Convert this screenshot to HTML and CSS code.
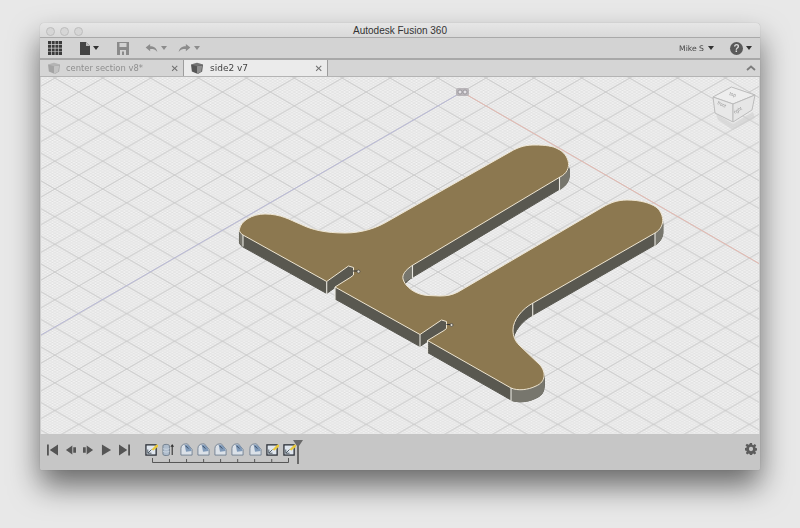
FILE: index.html
```html
<!DOCTYPE html>
<html lang="en">
<head>
<meta charset="utf-8">
<title>Autodesk Fusion 360</title>
<link rel="stylesheet" href="styles.css">
</head>
<body>
<svg class="defs" width="0" height="0" aria-hidden="true">
  <defs>
    <symbol id="cube" viewBox="0 0 16 14">
      <path d="M1 3 8 1l7 2-1 8-5 3-7-3z" fill="currentColor"/>
      <path d="M8 5v9l5-3 1-7z" fill="#fff" opacity=".35"/>
      <path d="M1 3l7 2 7-2-7-2z" fill="#fff" opacity=".18"/>
    </symbol>
    <symbol id="sketch" viewBox="0 0 14 14">
      <rect x="1" y="2" width="11" height="11" fill="#dfe6ee" stroke="#2c3038" stroke-width="1.4"/>
      <path d="M3 11V7M3 11h4M3 11l4-4" fill="none" stroke="#4a5560" stroke-width="1"/>
      <path d="M7 7l5-5 2 0v2l-5 4z" fill="#e8c83c"/>
    </symbol>
    <symbol id="extrude" viewBox="0 0 14 14">
      <path d="M1 3c0-2 7-2 7 0v9c0 2-7 2-7 0z" fill="#aebccc" stroke="#5d6c7c" stroke-width=".8"/>
      <path d="M1 6c2 1 5 1 7 0M1 9c2 1 5 1 7 0" fill="none" stroke="#dde4ec" stroke-width=".7"/>
      <path d="M11 13V3" stroke="#333" stroke-width="1.2"/>
      <path d="M9 4l2-3 2 3z" fill="#333"/>
    </symbol>
    <symbol id="fillet" viewBox="0 0 14 14">
      <path d="M1 13V6c0-3 2-5 5-5h2l5 6v6z" fill="#dbe1e8" stroke="#67778a" stroke-width=".9"/>
      <path d="M5 1.500c4 0 7 3 7.500 7l-6 1z" fill="#7f99b8"/>
      <path d="M6 3l3 3" stroke="#34465c" stroke-width="1"/>
    </symbol>
  </defs>
</svg>

<main class="window">
  <header class="titlebar">
    <div class="lights">
      <span class="light"></span><span class="light"></span><span class="light"></span>
    </div>
    <span class="title">Autodesk Fusion 360</span>
  </header>

  <nav class="toolbar">
    <svg class="ico-grid" viewBox="0 0 14 14">
      <path fill="#3a3a3a" d="M0 0h3v3H0zM3.700 0h3v3h-3zM7.400 0h3v3h-3zM11 0h3v3h-3zM0 3.700h3v3H0zM3.700 3.700h3v3h-3zM7.400 3.700h3v3h-3zM11 3.700h3v3h-3zM0 7.400h3v3H0zM3.700 7.400h3v3h-3zM7.400 7.400h3v3h-3zM11 7.400h3v3h-3zM0 11h3v3H0zM3.700 11h3v3h-3zM7.400 11h3v3h-3zM11 11h3v3h-3z"/>
    </svg>
    <span class="tool tool-file">
      <svg class="ico-doc" viewBox="0 0 10 13"><path fill="#444" d="M0 0h6l4 4v9H0z"/><path fill="#bbb" d="M6 0v4h4z"/></svg>
      <span class="caret"></span>
    </span>
    <svg class="ico-save" viewBox="0 0 12 13">
      <path fill="#8a8a8a" d="M0 0h12v13H0z"/>
      <path fill="#d2d2d2" d="M2.500 1H9.500V5H2.500zM3 8h6v5H3z"/>
      <path fill="#8a8a8a" d="M5 9.500h2V13H5z"/>
    </svg>
    <span class="tool tool-undo">
      <svg class="ico-arrow" viewBox="0 0 13 10"><path fill="#8c8c8c" d="M0 4 5 0v2.500c4 0 7 1.500 8 6.500-2-3-4-3.500-8-3.500V8z"/></svg>
      <span class="caret caret-dim"></span>
    </span>
    <span class="tool tool-redo">
      <svg class="ico-arrow" viewBox="0 0 13 10"><path fill="#8c8c8c" d="M13 4 8 0v2.500C4 2.500 1 4 0 9c2-3 4-3.500 8-3.500V8z"/></svg>
      <span class="caret caret-dim"></span>
    </span>
    <span class="spacer"></span>
    <span class="user">Mike S</span>
    <span class="caret caret-user"></span>
    <span class="help">?</span>
    <span class="caret"></span>
  </nav>

  <div class="tabs">
    <div class="tab">
      <svg class="ico-cube" viewBox="0 0 16 14"><use href="#cube"/></svg>
      <span class="tab-name">center section v8*</span>
      <span class="tab-close">✕</span>
    </div>
    <div class="tab tab-active">
      <svg class="ico-cube" viewBox="0 0 16 14"><use href="#cube"/></svg>
      <span class="tab-name">side2 v7</span>
      <span class="tab-close">✕</span>
    </div>
    <span class="spacer"></span>
    <svg class="ico-chevron" viewBox="0 0 10 6"><path d="M1 5l4-3.500L9 5" fill="none" stroke="#7c7c7c" stroke-width="1.800"/></svg>
  </div>

  <svg class="viewport" viewBox="41 77 718 357" preserveAspectRatio="none">
    <defs>
      <pattern id="fine" width="4.790" height="2.770" patternUnits="userSpaceOnUse" patternTransform="translate(462 92)">
        <path d="M0 0 4.790 2.770M0 2.770 4.790 0" stroke="#dadada" stroke-width=".6" fill="none"/>
      </pattern>
      <pattern id="major" width="47.900" height="27.700" patternUnits="userSpaceOnUse" patternTransform="translate(462 92)">
        <path d="M0 0 47.900 27.700M0 27.700 47.900 0" stroke="#c9c9c9" stroke-width="1" fill="none"/>
      </pattern>
      <path id="outline" d="M239.500 229C241 221 252 214 265 214C281 214 290 220 300 224C312 230 326 233 345 233C362 233 377 228 390 220L510 152C520 146 527 145 535 145C545 145 553 146 558 149C569 154 574 170 560 177L413 265C405 270 402 275 403 279C405 287 416 295 428 295.500L440 296C447 296 452 295 458 292L603 207C610 203 617 200 627 200C640 200 650 203 656 207C663 212 667 226 655 233L533 303C522 309 513 320 513 330C513 336 515 341 519 345L540 365C546 372 546 382 536 386C528 390 518 391 511 388L427.500 340.500L444 330.500L446.500 328.500V321.500L441.500 320L420 334.500L335 287L351 277L353.500 275V267.500L348.500 266L326.700 281.500L243 235C240 233 239 231 239.500 229Z"/>
    </defs>
    <rect class="bg" x="41" y="77" width="718" height="357"/>
    <rect x="41" y="77" width="718" height="357" fill="url(#fine)"/>
    <rect x="41" y="77" width="718" height="357" fill="url(#major)"/>
    <path class="axis-blue" d="M462 92 41 335"/>
    <path class="axis-red" d="M462 92 759 263.500"/>

    <g class="home">
      <rect x="456" y="88" width="13" height="8" rx="2"/>
      <circle cx="460" cy="92" r="2"/>
      <circle cx="465" cy="92" r="2"/>
    </g>

    <g class="walls">
      <use href="#outline" y="2"/><use href="#outline" y="4"/><use href="#outline" y="6"/>
      <use href="#outline" y="8"/><use href="#outline" y="10"/><use href="#outline" y="12"/>
    </g>
    <g class="wall-ends">
      <path d="M560 177C568 172 571 168 570 164V177C569 182 566 186 560 190z"/>
      <path d="M655 233C662 229 664 224 663.500 220V233C663 238 660 242 655 246z"/>
      <path d="M511 388C520 391 530 390 538 385 542 383 544 380 544 377V390C543 394 540 397 535 399 527 403 519 403 511 401z"/>
      <path d="M243 235C240 233 239 231 239.500 229V241C240 244 241 246 243 247z"/>
      <path d="M413 265C405 270 402 275 403 279V286L405 282C407 280 410 279 413 278z"/>
    </g>
    <use class="top" href="#outline"/>
    <path class="tangents" d="M559.500 177v13M655 233v13.500M532.700 303v14M511 388v13.500M412.500 265v13M420 334.500v12.500M427.500 340.500v12.500M243 235v11.500M326.700 281.500v12.500M335 287v13"/>
    <g class="pt">
      <path d="M353 271h4M446.500 324.500h4"/>
      <circle cx="358.500" cy="271.500" r="1.500"/>
      <circle cx="451.500" cy="325" r="1.500"/>
    </g>

    <g class="viewcube">
      <path class="vc-shadow" d="M716 114 733 124 753 112 755 118 733 130 718 120z"/>
      <path class="vc-face" d="M713 97 731.500 87 755 95 733 104z"/>
      <path class="vc-face vc-left" d="M713 97 733 104V122L715 113z"/>
      <path class="vc-face vc-right" d="M733 104 755 95 752 110 733 122z"/>
      <text class="vc-text" transform="translate(729 95) rotate(18)">top</text>
      <text class="vc-text" transform="translate(717 104) rotate(25) scale(.9 1)">front</text>
      <text class="vc-text" transform="translate(735 114) rotate(-32) scale(.9 1)">right</text>
    </g>
  </svg>

  <footer class="timeline">
    <div class="transport">
      <svg class="ico-play" viewBox="0 0 12 12"><path d="M0 0h2v12H0zM12 0v12L3 6z"/></svg>
      <svg class="ico-play" viewBox="0 0 12 12"><path d="M8 1v10L1 6zM9 3h3v6H9z"/></svg>
      <svg class="ico-play" viewBox="0 0 12 12"><path d="M0 3h3v6H0zM4 1v10l7-5z"/></svg>
      <svg class="ico-play" viewBox="0 0 12 12"><path d="M1 0v12l10-6z"/></svg>
      <svg class="ico-play" viewBox="0 0 12 12"><path d="M0 0v12l9-6zM10 0h2v12h-2z"/></svg>
    </div>
    <div class="history">
      <div class="features">
        <svg class="feature" viewBox="0 0 14 14"><use href="#sketch"/></svg>
        <svg class="feature" viewBox="0 0 14 14"><use href="#extrude"/></svg>
        <svg class="feature" viewBox="0 0 14 14"><use href="#fillet"/></svg>
        <svg class="feature" viewBox="0 0 14 14"><use href="#fillet"/></svg>
        <svg class="feature" viewBox="0 0 14 14"><use href="#fillet"/></svg>
        <svg class="feature" viewBox="0 0 14 14"><use href="#fillet"/></svg>
        <svg class="feature" viewBox="0 0 14 14"><use href="#fillet"/></svg>
        <svg class="feature" viewBox="0 0 14 14"><use href="#sketch"/></svg>
        <svg class="feature" viewBox="0 0 14 14"><use href="#sketch"/></svg>
      </div>
      <svg class="ruler" viewBox="0 0 138 5">
        <path d="M.500 0v4.500h137V0M17.600 1v3M34.800 1v3M52 1v3M69.100 1v3M86.300 1v3M103.400 1v3M120.600 1v3" fill="none" stroke="#555" stroke-width="1"/>
      </svg>
      <svg class="marker" viewBox="0 0 10 24"><path d="M0 0h10L6 6v18H4V6z" fill="#6a6a6a"/></svg>
    </div>
    <span class="spacer"></span>
    <svg class="ico-gear" viewBox="0 0 14 14">
      <path fill="#5c5c5c" fill-rule="evenodd" d="M5.800 0h2.400l.3 2 1.200.5 1.700-1.200 1.700 1.700-1.200 1.700.5 1.200 2 .3v2.400l-2 .3-.5 1.200 1.200 1.700-1.700 1.700-1.700-1.200-1.200.5-.3 2H5.800l-.3-2-1.200-.5-1.700 1.200-1.700-1.700 1.200-1.700-.5-1.200-2-.3V5.800l2-.3.5-1.200L.6 2.600l1.700-1.700L4 2.100l1.200-.5zM7 4.500a2.500 2.500 0 1 0 0 5 2.500 2.500 0 0 0 0-5z"/>
    </svg>
  </footer>
</main>
</body>
</html>
```
FILE: styles.css
```css
* { box-sizing: border-box; }
html, body { margin: 0; height: 100%; }
body {
  background: #e8e8e8;
  padding: 23px 40px 0;
  overflow: hidden;
  font-family: "DejaVu Sans", sans-serif;
}
.defs { position: absolute; }
.window {
  width: 720px;
  height: 447px;
  display: flex;
  flex-direction: column;
  background: #cfcfcf;
  border-radius: 4px 4px 2px 2px;
  box-shadow: 0 16px 30px rgba(0, 0, 0, .55), 0 0 1px rgba(0, 0, 0, .3);
  overflow: hidden;
  filter: blur(.4px);
}
.spacer { flex: 1; }

.titlebar {
  height: 15px;
  flex: none;
  display: flex;
  align-items: center;
  justify-content: center;
  padding-top: 1px;
  position: relative;
  background: linear-gradient(#e6e6e6, #d9d9d9);
  border-bottom: 1px solid #a9a9a9;
}
.lights {
  position: absolute;
  left: 6px;
  top: 3.500px;
  display: flex;
  gap: 5px;
}
.light {
  width: 9px;
  height: 9px;
  border-radius: 50%;
  background: #d6d6d6;
  border: 1px solid #bdbdbd;
}
.title {
  font: 10px "Liberation Sans", sans-serif;
  color: #333;
}

.toolbar {
  height: 22px;
  flex: none;
  display: flex;
  align-items: center;
  padding: 0 8px;
  background: #d3d3d3;
  border-bottom: 2px solid #a8a8a8;
}
.tool { display: flex; align-items: center; gap: 3px; }
.ico-grid { width: 14px; height: 14px; }
.tool-file { margin-left: 18px; }
.ico-doc { width: 10px; height: 13px; }
.ico-save { width: 12px; height: 13px; margin-left: 18px; }
.tool-undo { margin-left: 16px; }
.tool-redo { margin-left: 11px; }
.ico-arrow { width: 13px; height: 9px; }
.caret {
  width: 0;
  height: 0;
  border-left: 3px solid transparent;
  border-right: 3px solid transparent;
  border-top: 4px solid #333;
}
.caret-dim { border-top-color: #8c8c8c; }
.caret-user { margin: 0 16px 0 4px; }
.user { font: 7.700px "DejaVu Sans", sans-serif; color: #444; }
.help {
  width: 13px;
  height: 13px;
  margin-right: 3px;
  border-radius: 50%;
  background: #5a5a5a;
  color: #ddd;
  font: bold 10px/13px "Liberation Sans", sans-serif;
  text-align: center;
}

.tabs {
  height: 17px;
  flex: none;
  display: flex;
  align-items: stretch;
  background: #d5d5d5;
  border-bottom: 1px solid #b4b4b4;
  padding-right: 4px;
}
.tab {
  width: 144px;
  display: flex;
  align-items: center;
  padding: 0 4px 0 7px;
  color: #a4a4a4;
  border-right: 1px solid #9d9d9d;
}
.tab-active {
  width: 144px;
  background: #ebebeb;
  color: #555;
  padding-left: 6px;
}
.ico-cube { width: 14px; height: 12px; flex: none; }
.tab-name { flex: 1; margin-left: 5px; font-size: 8.400px; color: #8e8e8e; }
.tab-active .tab-name { margin-left: 6px; font-size: 9px; color: #444; }
.tab-close { font: bold 10px "DejaVu Sans", sans-serif; color: #6e6e6e; }
.ico-chevron { width: 10px; height: 6px; align-self: center; }

.viewport {
  display: block;
  flex: none;
  width: 718px;
  height: 357px;
  margin: 0 1px;
}
.bg { fill: #f2f2f2; }
.axis-blue { stroke: #b8b8d6; stroke-width: 1; fill: none; }
.axis-red { stroke: #e4b7ae; stroke-width: 1; fill: none; }
.home rect { fill: #b9b5b9; }
.home circle { fill: #e4e2e6; stroke: #8a868c; stroke-width: .7; }
.walls { fill: #595850; stroke: #595850; stroke-width: 1; }
.wall-ends { fill: #77766d; }
.top { fill: #8c7850; stroke: #efe6d2; stroke-width: 1; }
.tangents { stroke: #e9e7e0; stroke-width: 1.100; fill: none; }
.pt path { stroke: #333; stroke-width: 1; fill: none; }
.pt circle { fill: #e2dccd; stroke: #444; stroke-width: .7; }
.vc-shadow { fill: #cfcfcf; opacity: .6; }
.vc-face { fill: #eeeeee; stroke: #bcbcbc; stroke-width: 1; }
.vc-left { fill: #e8e8e8; }
.vc-right { fill: #e6e6e6; }
.vc-text { font: 5px "Liberation Sans", sans-serif; fill: #989898; }

.timeline {
  flex: 1;
  display: flex;
  align-items: flex-start;
  padding: 8px 2px 0 7px;
  background: #c6c6c6;
  position: relative;
}
.transport { display: flex; gap: 7px; margin-top: 2px; }
.ico-play { width: 11px; height: 12px; fill: #555; }
.history { position: relative; margin-left: 15px; }
.features { display: flex; gap: 4.300px; margin-top: 1px; }
.feature { width: 13px; height: 13px; flex: none; }
.ruler { display: block; width: 137px; height: 5px; margin: 2px 0 0 7px; }
.marker {
  position: absolute;
  left: 148px;
  top: -2px;
  width: 10px;
  height: 24px;
}
.ico-gear { width: 12px; height: 12px; margin: 1px 1px 0 0; }
```
